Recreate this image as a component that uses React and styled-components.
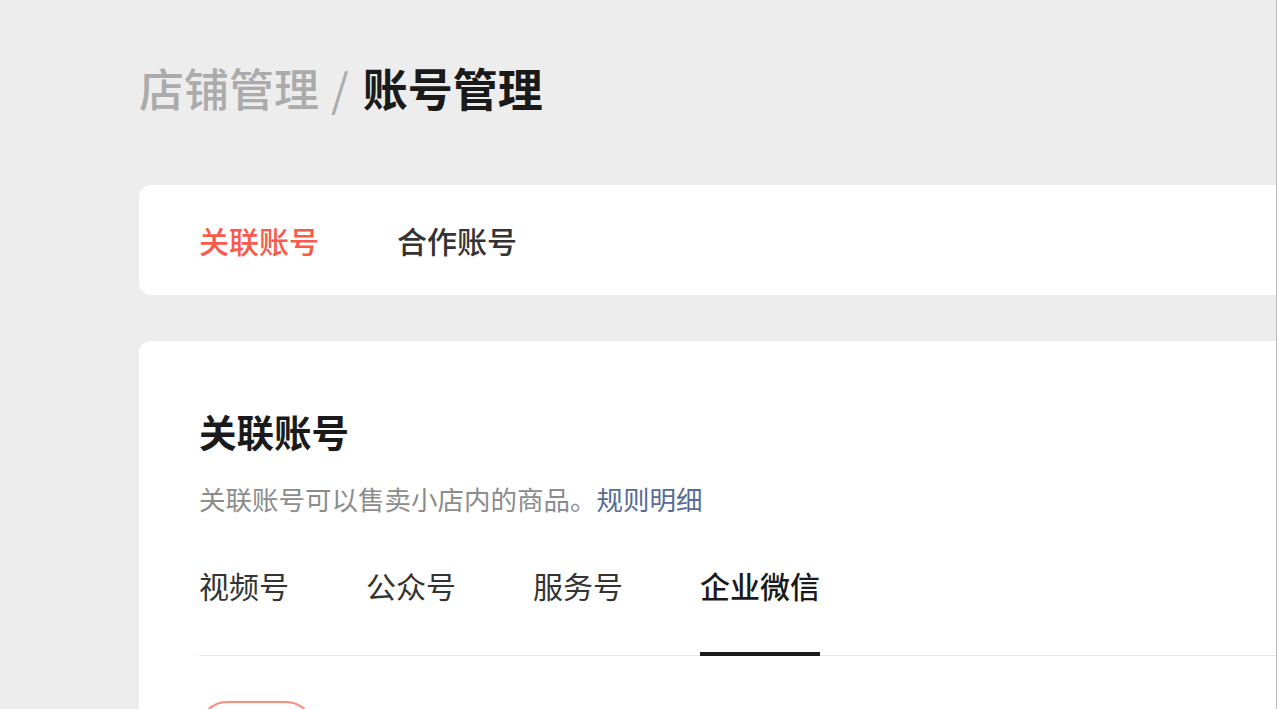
import React, { useState } from "react";
import styled, { createGlobalStyle } from "styled-components";

const GlobalStyle = createGlobalStyle`
  html, body {
    margin: 0;
    padding: 0;
    background: #ededed;
    overflow: hidden;
  }
  * {
    box-sizing: border-box;
  }
`;

const Page = styled.div`
  width: 100vw;
  height: 100vh;
  overflow: hidden;
  padding: 61px 0 0 139px;
  background: #ededed;
  border-right: 1px solid #bababa;
  font-family: "Noto Sans CJK SC", "Noto Sans", sans-serif;
`;

const Breadcrumb = styled.div`
  display: flex;
  align-items: center;
  font-size: 45px;
  line-height: 54px;
  white-space: nowrap;
`;

const Crumb = styled.span`
  color: ${({ $current }) => ($current ? "#1a1a1a" : "#ababab")};
  font-weight: ${({ $current }) => ($current ? 600 : 500)};
`;

const Slash = styled.span`
  color: #ababab;
  margin: 0 14px 0 12px;
  font-weight: 400;
`;

const Card = styled.section`
  width: 1200px;
  background: #fff;
  border-radius: 12px;
  margin-top: ${({ $gap }) => $gap}px;
  padding: ${({ $pad }) => $pad};
`;

const TopTabs = styled.nav`
  height: 110px;
  display: flex;
  align-items: center;
  gap: 78px;
`;

const TopTab = styled.button`
  border: 0;
  background: none;
  padding: 0;
  font-family: inherit;
  font-size: 30px;
  line-height: 42px;
  font-weight: 500;
  cursor: pointer;
  color: ${({ $active }) => ($active ? "#fa5a4b" : "#333")};
`;

const Title = styled.h2`
  margin: 0;
  font-size: 37.5px;
  line-height: 52px;
  font-weight: 600;
  color: #1a1a1a;
`;

const Desc = styled.p`
  margin: 24px 0 0;
  font-size: 26.5px;
  line-height: 36px;
  color: #8c8c8c;
  white-space: nowrap;
`;

const Link = styled.a`
  color: #576b95;
  text-decoration: none;
  cursor: pointer;
`;

const SubTabs = styled.nav`
  margin-top: 47px;
  display: flex;
  gap: 77px;
  border-bottom: 1px solid #e6e6e6;
`;

const SubTab = styled.button`
  position: relative;
  border: 0;
  background: none;
  padding: 0 0 49px;
  font-family: inherit;
  font-size: 30px;
  line-height: 42px;
  cursor: pointer;
  color: ${({ $active }) => ($active ? "#1a1a1a" : "#333")};
  font-weight: ${({ $active }) => ($active ? 500 : 400)};

  &::after {
    content: "";
    position: absolute;
    left: 0;
    right: 0;
    bottom: -1px;
    height: 4px;
    background: ${({ $active }) => ($active ? "#1a1a1a" : "transparent")};
  }
`;

const AddButton = styled.button`
  display: block;
  margin-top: 45px;
  width: 115px;
  height: 56px;
  border: 2px solid #fb8e7f;
  border-radius: 28px;
  background: #fff;
  cursor: pointer;
`;

const topTabs = ["关联账号", "合作账号"];
const subTabs = ["视频号", "公众号", "服务号", "企业微信"];

const App = () => {
  const [top, setTop] = useState(0);
  const [sub, setSub] = useState(3);

  return (
    <>
      <GlobalStyle />
      <Page>
        <Breadcrumb>
          <Crumb>店铺管理</Crumb>
          <Slash>/</Slash>
          <Crumb $current>账号管理</Crumb>
        </Breadcrumb>

        <Card $gap={70} $pad="0 60px">
          <TopTabs>
            {topTabs.map((t, i) => (
              <TopTab key={t} $active={i === top} onClick={() => setTop(i)}>
                {t}
              </TopTab>
            ))}
          </TopTabs>
        </Card>

        <Card $gap={46} $pad="64px 0 40px 60px">
          <Title>关联账号</Title>
          <Desc>
            关联账号可以售卖小店内的商品。<Link>规则明细</Link>
          </Desc>
          <SubTabs>
            {subTabs.map((t, i) => (
              <SubTab key={t} $active={i === sub} onClick={() => setSub(i)}>
                {t}
              </SubTab>
            ))}
          </SubTabs>
          <AddButton aria-label="添加" />
        </Card>
      </Page>
    </>
  );
};

export default App;
